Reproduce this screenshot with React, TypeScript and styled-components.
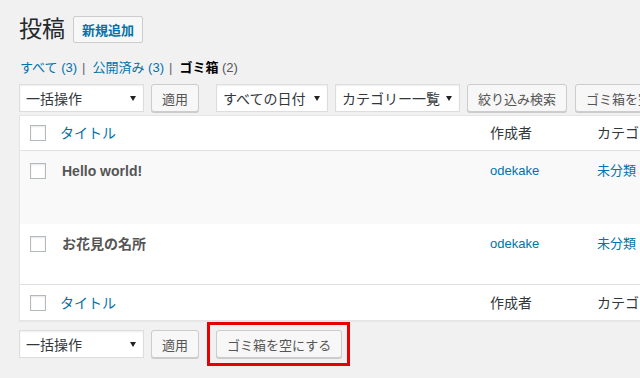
import React from "react";
import styled, { createGlobalStyle } from "styled-components";

const GlobalStyle = createGlobalStyle`
  html, body {
    margin: 0;
    padding: 0;
    background: #f1f1f1;
    overflow: hidden;
  }
  body {
    font-family: "Liberation Sans", "Noto Sans CJK JP", sans-serif;
    color: #444;
    font-size: 13px;
  }
`;

const Wrap = styled.div`
  width: 700px;
  padding: 16px 0 0 19px;
`;

const HeaderRow = styled.div`
  display: flex;
  align-items: center;
  gap: 8px;
  height: 27px;
`;

const Title = styled.h1`
  margin: 0;
  font-size: 23px;
  line-height: 27px;
  font-weight: 400;
  color: #23282d;
`;

const AddButton = styled.a`
  display: inline-flex;
  align-items: center;
  box-sizing: border-box;
  height: 27px;
  padding: 0 8px;
  font-size: 13px;
  font-weight: 700;
  color: #0073aa;
  background: #f7f7f7;
  border: 1px solid #ccc;
  border-radius: 2px;
`;

const Views = styled.ul`
  display: flex;
  margin: 15px 0 0 1px;
  padding: 0;
  list-style: none;
  font-size: 13px;
  line-height: 20px;
  color: #666;
`;

const ViewItem = styled.li`
  white-space: pre;
`;

const ViewLink = styled.a<{ $current?: boolean }>`
  color: ${(p) => (p.$current ? "#000" : "#0073aa")};
  font-weight: ${(p) => (p.$current ? 700 : 400)};
`;

const Count = styled.span<{ $current?: boolean }>`
  color: ${(p) => (p.$current ? "#555" : "#0073aa")};
  font-weight: 400;
`;

const Sep = styled.span`
  color: #666;
  padding: 0 7px 0 5px;
`;

const Tablenav = styled.div<{ $top?: boolean }>`
  display: flex;
  align-items: center;
  flex-wrap: nowrap;
  margin-top: ${(p) => (p.$top ? "6px" : "1px")};
  height: ${(p) => (p.$top ? "28px" : "44px")};
`;

const Group = styled.div<{ $after: number }>`
  display: flex;
  align-items: center;
  gap: 7px;
  margin-right: ${(p) => p.$after}px;
  flex-shrink: 0;
`;

const SelectBox = styled.div<{ $w: number }>`
  box-sizing: border-box;
  width: ${(p) => p.$w}px;
  height: 28px;
  display: flex;
  align-items: center;
  justify-content: space-between;
  padding: 0 7px 0 6px;
  background: #fff;
  border: 1px solid #ddd;
  box-shadow: inset 0 1px 2px rgba(0, 0, 0, 0.07);
  font-size: 14px;
  color: #32373c;
  white-space: nowrap;
  flex-shrink: 0;
`;

const Caret = styled.span`
  width: 0;
  height: 0;
  border-left: 3px solid transparent;
  border-right: 3px solid transparent;
  border-top: 5px solid #222;
`;

const Button = styled.button`
  box-sizing: border-box;
  height: 28px;
  padding: 0 10px;
  font-family: inherit;
  font-size: 13px;
  color: #555;
  background: #f7f7f7;
  border: 1px solid #ccc;
  border-radius: 3px;
  box-shadow: 0 1px 0 #ccc;
  white-space: nowrap;
  flex-shrink: 0;
  cursor: pointer;
`;

const Highlight = styled.div`
  display: flex;
  box-sizing: border-box;
  height: 44px;
  padding: 5px 5px 5px 6px;
  border: 3px solid #e60000;
  margin-left: -9px;
  flex-shrink: 0;
`;

const Table = styled.div`
  margin-top: 3px;
  background: #fff;
  border: 1px solid #e5e5e5;
  box-shadow: 0 1px 1px rgba(0, 0, 0, 0.04);
`;

const cols = "40px 430px 107px 1fr";

const HeadRow = styled.div<{ $foot?: boolean }>`
  display: grid;
  grid-template-columns: ${cols};
  align-items: center;
  height: ${(p) => (p.$foot ? "35px" : "34px")};
  border-top: ${(p) => (p.$foot ? "1px solid #e1e1e1" : "none")};
  border-bottom: ${(p) => (p.$foot ? "none" : "1px solid #e1e1e1")};
  font-size: 14px;
  line-height: 18px;
  color: #32373c;
`;

const BodyRow = styled.div<{ $h: number; $alt?: boolean }>`
  display: grid;
  grid-template-columns: ${cols};
  align-items: start;
  box-sizing: border-box;
  height: ${(p) => p.$h}px;
  padding-top: 12px;
  background: ${(p) => (p.$alt ? "#f9f9f9" : "#fff")};
  line-height: 16px;
`;

const CheckCell = styled.div`
  display: flex;
  padding-left: 10px;
`;

const Checkbox = styled.span`
  display: block;
  box-sizing: border-box;
  width: 16px;
  height: 16px;
  background: #fff;
  border: 1px solid #b4b9be;
  box-shadow: inset 0 1px 2px rgba(0, 0, 0, 0.1);
`;

const SortLink = styled.a`
  color: #0073aa;
`;

const HeadText = styled.span`
  white-space: nowrap;
`;

const RowTitle = styled.strong`
  padding-left: 2px;
  font-size: 14px;
  font-weight: 700;
  color: #555;
  white-space: nowrap;
`;

const CellLink = styled.a`
  font-size: 13px;
  color: #0073aa;
  white-space: nowrap;
`;

const posts = [
  { title: "Hello world!", author: "odekake", cat: "未分類", h: 73, alt: true },
  { title: "お花見の名所", author: "odekake", cat: "未分類", h: 60, alt: false },
];

function Select({ w, label }: { w: number; label: string }) {
  return (
    <SelectBox $w={w}>
      <span>{label}</span>
      <Caret />
    </SelectBox>
  );
}

function Heading({ foot }: { foot?: boolean }) {
  return (
    <HeadRow $foot={foot}>
      <CheckCell>
        <Checkbox />
      </CheckCell>
      <SortLink>タイトル</SortLink>
      <HeadText>作成者</HeadText>
      <HeadText>カテゴリー</HeadText>
    </HeadRow>
  );
}

export default function App() {
  return (
    <>
      <GlobalStyle />
      <Wrap>
        <HeaderRow>
          <Title>投稿</Title>
          <AddButton>新規追加</AddButton>
        </HeaderRow>
        <Views>
          <ViewItem>
            <ViewLink>
              すべて <Count>(3)</Count>
            </ViewLink>
            <Sep>|</Sep>
          </ViewItem>
          <ViewItem>
            <ViewLink>
              公開済み <Count>(3)</Count>
            </ViewLink>
            <Sep>|</Sep>
          </ViewItem>
          <ViewItem>
            <ViewLink $current>
              ゴミ箱 <Count $current>(2)</Count>
            </ViewLink>
          </ViewItem>
        </Views>
        <Tablenav $top>
          <Group $after={17}>
            <Select w={125} label="一括操作" />
            <Button>適用</Button>
          </Group>
          <Group $after={8}>
            <Select w={112} label="すべての日付" />
            <Select w={125} label="カテゴリー一覧" />
            <Button>絞り込み検索</Button>
          </Group>
          <Button>ゴミ箱を空にする</Button>
        </Tablenav>
        <Table>
          <Heading />
          {posts.map((p) => (
            <BodyRow key={p.title} $h={p.h} $alt={p.alt}>
              <CheckCell>
                <Checkbox />
              </CheckCell>
              <RowTitle>{p.title}</RowTitle>
              <CellLink>{p.author}</CellLink>
              <CellLink>{p.cat}</CellLink>
            </BodyRow>
          ))}
          <Heading foot />
        </Table>
        <Tablenav>
          <Group $after={17}>
            <Select w={125} label="一括操作" />
            <Button>適用</Button>
          </Group>
          <Highlight>
            <Button>ゴミ箱を空にする</Button>
          </Highlight>
        </Tablenav>
      </Wrap>
    </>
  );
}
